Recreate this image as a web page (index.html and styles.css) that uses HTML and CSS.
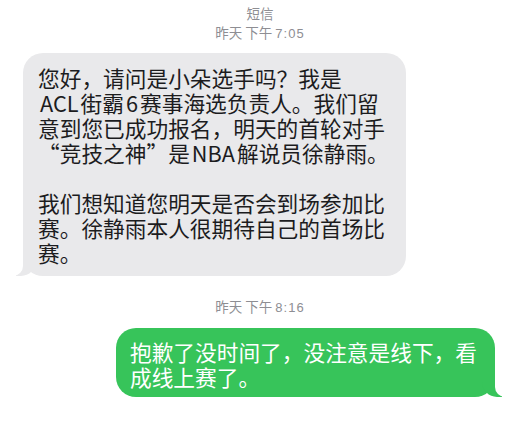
FILE: index.html
```html
<!DOCTYPE html>
<html lang="zh-CN">
<head>
  <meta charset="UTF-8" />
  <meta name="viewport" content="width=device-width, initial-scale=1.0" />
  <title>短信</title>
  <link rel="stylesheet" href="styles.css">
</head>
<body>
  <div class="thread">
    <div class="stamp">
      <div>短信</div>
      <div>昨天 下午<span class="time">7:05</span></div>
    </div>

    <div class="bubble incoming">
      您好，请问是小朵选手吗？我是<br/>
      <span class="latin">ACL</span>街霸<span class="latin">6</span>赛事海选负责人。我们留<br/>
      意到您已成功报名，明天的首轮对手<br/>
      “竞技之神”是<span class="latin">NBA</span>解说员徐静雨。<br/>
      <br/>
      我们想知道您明天是否会到场参加比<br/>
      赛。徐静雨本人很期待自己的首场比<br/>
      赛。
    </div>

    <div class="stamp second">
      <div>昨天 下午<span class="time">8:16</span></div>
    </div>

    <div class="bubble outgoing">
      抱歉了没时间了，没注意是线下，看<br/>
      成线上赛了。
    </div>
  </div>
</body>
</html>
```

FILE: styles.css
```css
body {
  margin: 0;
  background: #ffffff;
  font-family: "Noto Sans CJK SC", "Noto Sans", sans-serif;
}

.thread {
  display: flex;
  flex-direction: column;
  padding-top: 4px;
}

.stamp {
  text-align: center;
  color: #8e8e93;
  font-size: 13.5px;
  line-height: 19px;
}
.stamp .time {
  font-family: "Liberation Sans", sans-serif;
  font-size: 13px;
  letter-spacing: 1px;
  margin-left: 3px;
}
.stamp.second {
  margin-top: 21px;
}

.bubble {
  position: relative;
  font-size: 21.7px;
  line-height: 25px;
  border-radius: 20px;
}
.bubble .latin {
  margin: 0 2px;
}

.incoming {
  align-self: flex-start;
  margin: 10px 0 0 23px;
  padding: 12px 17px 11px 15px;
  background: #e9e9eb;
  color: #1c1c1e;
}
.incoming::before {
  content: "";
  position: absolute;
  bottom: 0;
  left: -7px;
  width: 20px;
  height: 20px;
  background: #e9e9eb;
  border-bottom-right-radius: 15px;
}
.incoming::after {
  content: "";
  position: absolute;
  bottom: 0;
  left: -10px;
  width: 10px;
  height: 20px;
  background: #ffffff;
  border-bottom-right-radius: 10px;
}

.outgoing {
  align-self: flex-end;
  margin: 11px 25px 0 0;
  padding: 11px 18px 8px 14px;
  background: #37c45a;
  color: #ffffff;
}
.outgoing::before {
  content: "";
  position: absolute;
  bottom: 0;
  right: -7px;
  width: 20px;
  height: 20px;
  background: #37c45a;
  border-bottom-left-radius: 15px;
}
.outgoing::after {
  content: "";
  position: absolute;
  bottom: 0;
  right: -10px;
  width: 10px;
  height: 20px;
  background: #ffffff;
  border-bottom-left-radius: 10px;
}
```
